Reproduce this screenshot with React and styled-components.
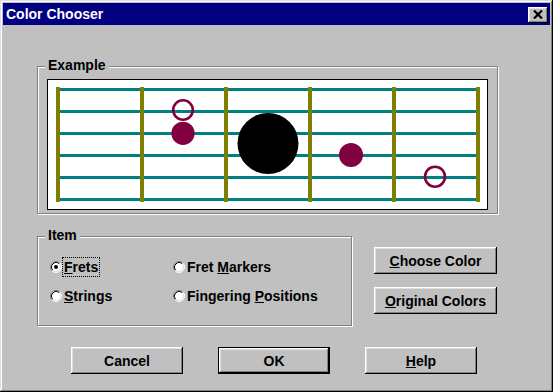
import React from 'react';
import styled, { createGlobalStyle, css } from 'styled-components';

const Global = createGlobalStyle`
  html, body { margin: 0; padding: 0; background: #c0c0c0; }
  body { font-family: "Liberation Sans", Arial, sans-serif; }
`;

const bevel = css`
  box-shadow: inset -1px -1px 0 #000, inset 1px 1px 0 #fff,
    inset -2px -2px 0 #808080, inset 2px 2px 0 #dfdfdf;
`;

const Window = styled.div`
  box-sizing: border-box;
  width: 553px;
  height: 392px;
  padding: 3px;
  display: flex;
  flex-direction: column;
  background: #c0c0c0;
  box-shadow: inset -1px -1px 0 #000, inset 1px 1px 0 #dfdfdf,
    inset -2px -2px 0 #808080, inset 2px 2px 0 #fff;
  font: bold 14px "Liberation Sans", Arial, sans-serif;
  color: #000;
`;

const TitleBar = styled.div`
  height: 22px;
  display: flex;
  align-items: center;
  justify-content: space-between;
  padding: 0 2px 0 3px;
  background: #000080;
  color: #fff;
`;

const Title = styled.span`
  font: bold 14px "Liberation Sans", Arial, sans-serif;
`;

const CloseButton = styled.button`
  width: 20px;
  height: 16px;
  padding: 0;
  border: none;
  display: flex;
  align-items: center;
  justify-content: center;
  background: #c0c0c0;
  margin-top: 1px;
  ${bevel}
`;

const Content = styled.div`
  display: flex;
  flex-direction: column;
  padding: 41px 0 0 34px;
`;

const Group = styled.div`
  position: relative;
  box-sizing: border-box;
  width: ${p => p.$w}px;
  height: ${p => p.$h}px;
  border: 1px solid #808080;
  box-shadow: inset 1px 1px 0 #fff, 1px 1px 0 #fff;
  padding: ${p => p.$pad};
`;

const Legend = styled.span`
  position: absolute;
  top: -10px;
  left: 7px;
  padding: 0 3px;
  line-height: 16px;
  background: #c0c0c0;
`;

const Canvas = styled.div`
  box-sizing: border-box;
  width: 441px;
  height: 131px;
  border: 1px solid #000;
  background: #fff;
  svg { display: block; }
`;

const MiddleRow = styled.div`
  display: flex;
  margin-top: 22px;
`;

const RadioGrid = styled.div`
  display: grid;
  grid-template-columns: 123px auto;
  row-gap: 9px;
`;

const RadioItem = styled.div`
  display: flex;
  align-items: center;
  height: 20px;
  svg { flex: none; }
`;

const RadioLabel = styled.span`
  box-sizing: border-box;
  height: 20px;
  display: flex;
  align-items: center;
  padding: 0 1px;
  border: 1px dotted ${p => (p.$focus ? '#000' : 'transparent')};
  white-space: nowrap;
`;

const SideButtons = styled.div`
  display: flex;
  flex-direction: column;
  gap: 13px;
  margin: 11px 0 0 22px;
`;

const Button = styled.button`
  box-sizing: border-box;
  width: ${p => p.$w}px;
  height: 27px;
  padding: 0;
  background: #c0c0c0;
  font: bold 14px "Liberation Sans", Arial, sans-serif;
  color: #000;
  border: ${p => (p.$default ? '1px solid #000' : 'none')};
  ${bevel}
`;

const BottomRow = styled.div`
  display: flex;
  gap: 35px;
  margin: 21px 0 0 34px;
`;

function Radio({ checked }) {
  return (
    <svg width="12" height="12" viewBox="0 0 12 12">
      <circle cx="6" cy="6" r="5" fill="#fff" />
      <path d="M9.89 2.11 A5.5 5.5 0 0 0 2.11 9.89" stroke="#808080" fill="none" />
      <path d="M9.89 2.11 A5.5 5.5 0 0 1 2.11 9.89" stroke="#fff" fill="none" />
      <path d="M9.18 2.82 A4.5 4.5 0 0 0 2.82 9.18" stroke="#000" fill="none" />
      <path d="M9.18 2.82 A4.5 4.5 0 0 1 2.82 9.18" stroke="#dfdfdf" fill="none" />
      {checked && <circle cx="6" cy="6" r="2" fill="#000" />}
    </svg>
  );
}

const frets = [8, 92, 176, 260, 344, 428];
const strings = [8, 30, 52, 74, 96, 118];

function Fretboard() {
  return (
    <svg width="439" height="129" viewBox="0 0 439 129">
      {strings.map(y => (
        <rect key={y} x="8" y={y} width="424" height="3" fill="#008080" />
      ))}
      {frets.map(x => (
        <rect key={x} x={x} y="7" width="4" height="115" fill="#808000" />
      ))}
      <circle cx="135" cy="30" r="9.8" fill="none" stroke="#800040" strokeWidth="2.6" />
      <circle cx="135" cy="53.3" r="11.6" fill="#800040" />
      <circle cx="220" cy="63.5" r="30.5" fill="#000" />
      <circle cx="303" cy="75" r="12" fill="#800040" />
      <circle cx="387" cy="96.7" r="10" fill="none" stroke="#800040" strokeWidth="2.6" />
    </svg>
  );
}

export default function App() {
  return (
    <>
      <Global />
      <Window>
        <TitleBar>
          <Title>Color Chooser</Title>
          <CloseButton aria-label="Close">
            <svg width="10" height="9" viewBox="0 0 10 9">
              <path d="M1 0.5 L9 8.5 M9 0.5 L1 8.5" stroke="#000" strokeWidth="2.2" />
            </svg>
          </CloseButton>
        </TitleBar>
        <Content>
          <Group $w={461} $h={148} $pad="12px 9px 3px 9px">
            <Legend>Example</Legend>
            <Canvas>
              <Fretboard />
            </Canvas>
          </Group>
          <MiddleRow>
            <Group $w={315} $h={90} $pad="20px 0 0 12px">
              <Legend>Item</Legend>
              <RadioGrid>
                <RadioItem>
                  <Radio checked />
                  <RadioLabel $focus><span><u>F</u>rets</span></RadioLabel>
                </RadioItem>
                <RadioItem>
                  <Radio />
                  <RadioLabel><span>Fret <u>M</u>arkers</span></RadioLabel>
                </RadioItem>
                <RadioItem>
                  <Radio />
                  <RadioLabel><span><u>S</u>trings</span></RadioLabel>
                </RadioItem>
                <RadioItem>
                  <Radio />
                  <RadioLabel><span>Fingering <u>P</u>ositions</span></RadioLabel>
                </RadioItem>
              </RadioGrid>
            </Group>
            <SideButtons>
              <Button $w={123}><u>C</u>hoose Color</Button>
              <Button $w={123}><u>O</u>riginal Colors</Button>
            </SideButtons>
          </MiddleRow>
          <BottomRow>
            <Button $w={112}>Cancel</Button>
            <Button $w={112} $default>OK</Button>
            <Button $w={112}><u>H</u>elp</Button>
          </BottomRow>
        </Content>
      </Window>
    </>
  );
}
